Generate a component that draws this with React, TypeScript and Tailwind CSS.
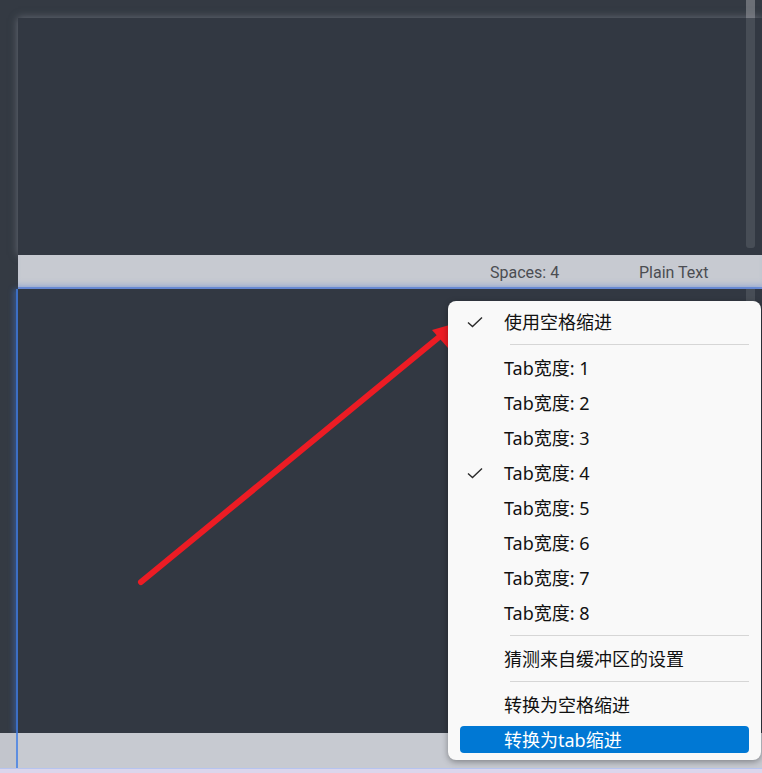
import React from "react";

type Item = {
  label: string;
  checked?: boolean;
  active?: boolean;
};

const groups: Item[][] = [
  [{ label: "使用空格缩进", checked: true }],
  [
    { label: "Tab宽度: 1" },
    { label: "Tab宽度: 2" },
    { label: "Tab宽度: 3" },
    { label: "Tab宽度: 4", checked: true },
    { label: "Tab宽度: 5" },
    { label: "Tab宽度: 6" },
    { label: "Tab宽度: 7" },
    { label: "Tab宽度: 8" },
  ],
  [{ label: "猜测来自缓冲区的设置" }],
  [{ label: "转换为空格缩进" }, { label: "转换为tab缩进", active: true }],
];

const Check: React.FC = () => (
  <svg width="16" height="12" viewBox="0 0 16 12" className="shrink-0">
    <path d="M1 6.5 L5.5 10.5 L15 1.5" fill="none" stroke="#2b2b2b" strokeWidth="1.4" />
  </svg>
);

const StatusBar: React.FC = () => (
  <div className="flex h-full items-center pt-[3px] font-['Roboto',sans-serif] text-[16px] text-[#4b4d52]">
    <div className="w-[472px]" />
    <div className="w-[149px]">Spaces: 4</div>
    <div>Plain Text</div>
  </div>
);

const Menu: React.FC = () => (
  <div className="absolute left-[448px] top-[301px] w-[313px] rounded-[8px] bg-[#f9f9f9] pt-[3px] pb-[3px] shadow-[0_2px_6px_rgba(0,0,0,0.35)] font-['Noto_Sans','Noto_Sans_CJK_SC',sans-serif] text-[18px]">
    {groups.map((group, gi) => (
      <div key={gi}>
        {gi > 0 && (
          <div className="flex h-[11px] items-center pl-[62px] pr-[12px]">
            <div className="h-px w-full bg-[#d6d6d6]" />
          </div>
        )}
        {group.map((item) => (
          <div key={item.label} className="px-[12px] py-[4px]">
            <div
              className={
                item.active
                  ? "flex h-[27px] items-center rounded-[4px] bg-[#0078d4] text-white"
                  : "flex h-[27px] items-center text-[#111]"
              }
            >
              <div className="flex w-[44px] justify-start pl-[7px]">
                {item.checked && <Check />}
              </div>
              <span className="leading-none">{item.label}</span>
            </div>
          </div>
        ))}
      </div>
    ))}
  </div>
);

const Arrow: React.FC = () => (
  <svg className="absolute left-0 top-0" width="762" height="773" viewBox="0 0 762 773">
    <line x1="141" y1="582" x2="444" y2="333" stroke="#ec1c24" strokeWidth="6" strokeLinecap="round" />
    <polygon points="460,322 432,330 448,348" fill="#ec1c24" />
  </svg>
);

export default function App() {
  return (
    <div className="relative flex h-[773px] w-[762px] flex-col overflow-hidden bg-[#343a43]">
      <div className="flex h-[18px] justify-end pr-[7px]">
        <div className="w-[9px] bg-[#6b6f76]" />
      </div>
      <div className="flex h-[237px] pl-[18px]">
        <div className="flex flex-1 justify-end bg-[#323842] pr-[7px] shadow-[0_0_8px_rgba(140,145,155,0.6)]">
          <div className="mb-[7px] w-[9px] rounded-b-[3px] bg-[#474d56]" />
        </div>
      </div>
      <div className="ml-[18px] h-[34px] border-b-2 border-[#6f8ed6] bg-[#c7cad1] shadow-[inset_0_-6px_6px_-4px_rgba(111,142,214,0.45)]">
        <StatusBar />
      </div>
      <div className="flex h-[444px] pl-[16px]">
        <div className="flex flex-1 justify-end border-l-2 border-[#3d6fc4] bg-[#323842] pr-[7px] shadow-[-3px_0_5px_rgba(61,111,196,0.45)]">
          <div className="w-[9px] bg-[#474d56]" />
        </div>
      </div>
      <div className="flex h-[35px]">
        <div className="w-[16px] bg-[#c2c5cc]" />
        <div className="flex-1 border-l-2 border-[#5d8ee0] bg-[#c7cad1]" />
      </div>
      <div className="h-[5px] border-t border-[#b6c4f0] bg-[#dcd6ec]" />
      <Arrow />
      <Menu />
    </div>
  );
}
